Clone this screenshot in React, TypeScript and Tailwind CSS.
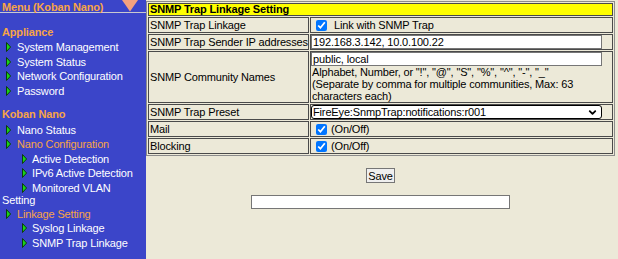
import { ChevronDown } from 'lucide-react';

function Bullet() {
  return (
    <svg width="5" height="10" viewBox="0 0 5 10" className="shrink-0">
      <path d="M0.5 0.5 L4.6 5 L0.5 9.5 Z" fill="#19d219" stroke="#0b3d0b" strokeWidth="1" strokeLinejoin="miter" />
    </svg>
  );
}

function MenuItem({ level, text, active, className = '' }: { level: 1 | 2; text: string; active?: boolean; className?: string }) {
  return (
    <div
      className={`flex items-center h-[14.5px] leading-[12px] ${level === 1 ? 'pl-[6px] gap-[6px]' : 'pl-[22px] gap-[5px]'} ${
        active ? 'text-[#f7a446]' : 'text-white'
      } ${className}`}
    >
      <Bullet />
      <span className="whitespace-nowrap">{text}</span>
    </div>
  );
}

function Sidebar() {
  return (
    <div className="w-[146px] shrink-0 bg-[#3b45c9] text-[11px]">
      {/* Header */}
      <div className="flex items-start h-[12px]">
        <span className="pl-[2px] pt-px leading-[12px] font-bold text-[#f7a446] whitespace-nowrap">Menu (Koban Nano)</span>
        <svg width="16" height="12" viewBox="0 0 16 12" className="ml-auto mr-[8px]">
          <path d="M0 0 L16 0 L8 11.5 Z" fill="#f4a17e" />
        </svg>
      </div>
      <div className="h-px bg-[#c9c9cf]" />

      <div className="mt-[12px] h-[14.5px] flex items-center pl-[2px] font-bold text-[#f7a446]">Appliance</div>
      <MenuItem level={1} text="System Management" className="mt-[0.5px]" />
      <MenuItem level={1} text="System Status" />
      <MenuItem level={1} text="Network Configuration" />
      <MenuItem level={1} text="Password" />

      <div className="mt-[9px] h-[14.5px] flex items-center pl-[2px] font-bold text-[#f7a446]">Koban Nano</div>
      <MenuItem level={1} text="Nano Status" className="mt-px" />
      <MenuItem level={1} text="Nano Configuration" active />
      <MenuItem level={2} text="Active Detection" />
      <MenuItem level={2} text="IPv6 Active Detection" />
      <MenuItem level={2} text="Monitored VLAN" />
      <div className="-mt-[1.5px] h-[12px] leading-[12px] pl-[2px] text-white">Setting</div>
      <MenuItem level={1} text="Linkage Setting" active className="mt-px" />
      <MenuItem level={2} text="Syslog Linkage" />
      <MenuItem level={2} text="SNMP Trap Linkage" />
    </div>
  );
}

const cell = 'border border-[#4a4a4a] p-0 align-middle';
const label = `${cell} pl-px leading-[14px] w-[161px] whitespace-nowrap overflow-hidden`;

function Check({ text, gap }: { text: string; gap: string }) {
  return (
    <div className={`flex items-center h-[14px] pl-[5px] ${gap}`}>
      <input type="checkbox" defaultChecked className="w-[11px] h-[11px] m-0 accent-[#0075ff]" />
      <span className="leading-[14px]">{text}</span>
    </div>
  );
}

export default function App() {
  return (
    <div className="flex h-[259px] w-[618px] overflow-hidden font-['Liberation_Sans',Arial,sans-serif] text-[11px] tracking-[-0.15px] text-black">
      <Sidebar />

      <div className="flex-1 bg-[#ece9d8] pt-px">
        <table className="table-fixed w-[469px] border border-[#8c8c8c] border-separate border-spacing-[1px] bg-[#ece9d8]">
          <colgroup>
            <col className="w-[161px]" />
            <col />
          </colgroup>
          <tbody>
            <tr>
              <td colSpan={2} className={`${cell} pl-px bg-[#ffff00] font-bold leading-[11px]`}>
                SNMP Trap Linkage Setting
              </td>
            </tr>
            <tr>
              <td className={label}>SNMP Trap Linkage</td>
              <td className={cell}>
                <Check text="Link with SNMP Trap" gap="gap-[7px]" />
              </td>
            </tr>
            <tr>
              <td className={label}>SNMP Trap Sender IP addresses</td>
              <td className={cell}>
                <input
                  type="text"
                  defaultValue="192.168.3.142, 10.0.100.22"
                  className="block w-[291px] h-[14px] px-px border border-[#767676] bg-white leading-[12px] outline-none"
                />
              </td>
            </tr>
            <tr>
              <td className={label}>SNMP Community Names</td>
              <td className={cell}>
                <input
                  type="text"
                  defaultValue="public, local"
                  className="block w-[291px] h-[14px] px-px border border-[#767676] bg-white leading-[12px] outline-none"
                />
                <div className="leading-[12px] pl-px">
                  Alphabet, Number, or "!", "@", "S", "%", "^", "-", "_"
                  <br />
                  (Separate by comma for multiple communities, Max: 63
                  <br />
                  characters each)
                </div>
              </td>
            </tr>
            <tr>
              <td className={label}>SNMP Trap Preset</td>
              <td className={cell}>
                <div className="relative w-[291px] h-[14px]">
                  <select
                    defaultValue="r001"
                    className="block w-full h-[14px] appearance-none border border-black rounded-[3px] bg-white pl-px leading-[12px] outline-none"
                  >
                    <option value="r001">FireEye:SnmpTrap:notifications:r001</option>
                  </select>
                  <ChevronDown className="absolute right-[4px] top-[2px] w-[11px] h-[11px] pointer-events-none" strokeWidth={4} />
                </div>
              </td>
            </tr>
            <tr>
              <td className={label}>Mail</td>
              <td className={cell}>
                <Check text="(On/Off)" gap="gap-[4px]" />
              </td>
            </tr>
            <tr>
              <td className={label}>Blocking</td>
              <td className={cell}>
                <Check text="(On/Off)" gap="gap-[4px]" />
              </td>
            </tr>
          </tbody>
        </table>

        <div className="w-[469px] flex flex-col items-center">
          <button className="mt-[12px] h-[15px] px-px border border-[#767676] bg-[#efefef] leading-[12px]">Save</button>
          <input type="text" className="mt-[12px] w-[259px] h-[14px] border border-[#767676] bg-white outline-none" />
        </div>
      </div>
    </div>
  );
}
